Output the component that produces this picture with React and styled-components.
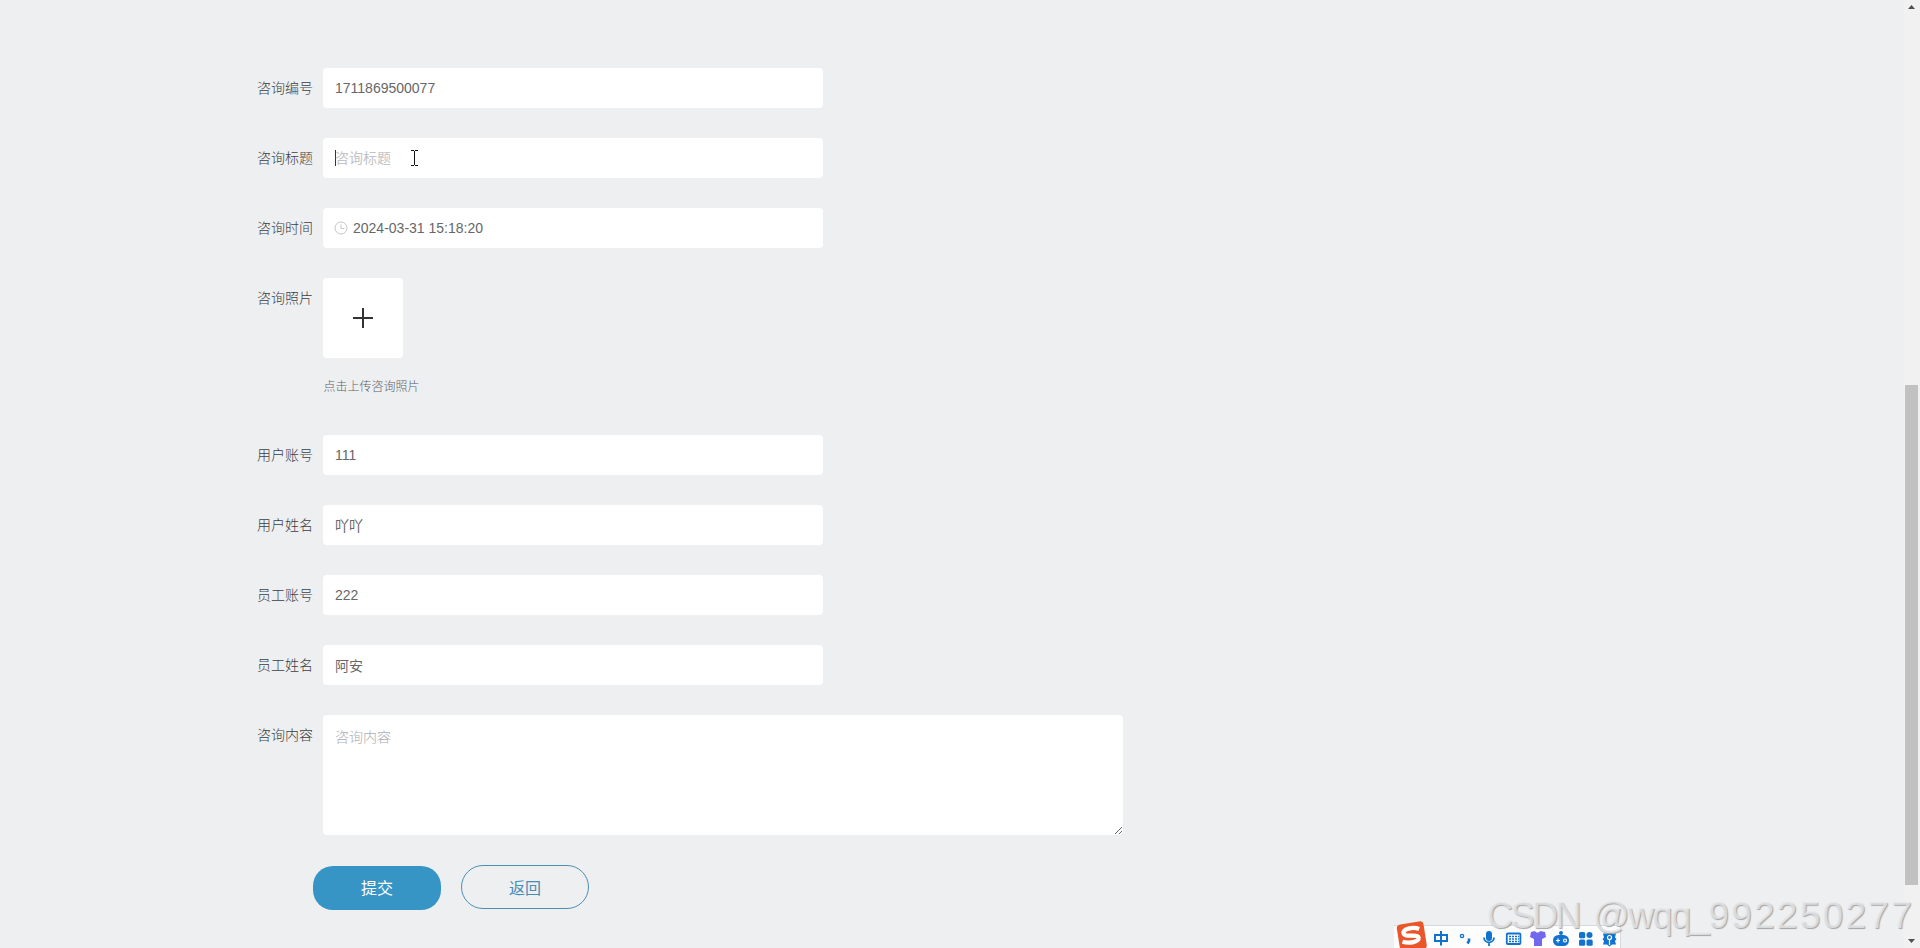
import React, { useState } from "react";
import styled, { createGlobalStyle } from "styled-components";

const fields = {
  top: [
    { label: "咨询编号", value: "1711869500077" },
    { label: "咨询标题", placeholder: "咨询标题", caret: true },
    { label: "咨询时间", value: "2024-03-31 15:18:20", clock: true },
  ],
  bottom: [
    { label: "用户账号", value: "111" },
    { label: "用户姓名", value: "吖吖" },
    { label: "员工账号", value: "222" },
    { label: "员工姓名", value: "阿安" },
  ],
};

const ClockIcon = () => (
  <ClockSvg width="14" height="14" viewBox="0 0 14 14">
    <circle cx="7" cy="7" r="6" />
    <path d="M7 3.5V7.5H10.500" />
  </ClockSvg>
);

const TextCursor = () => (
  <CursorSvg width="8" height="16" viewBox="0 0 8 16" stroke="#111" fill="none">
    <path d="M0 .5H3M4 .5H7M3.5 1V15M0 15.5H3M4 15.5H7" />
  </CursorSvg>
);

const Field = ({ label, value, placeholder, caret, clock }) => {
  const [text, setText] = useState(value || "");
  return (
    <FormItem>
      <Label>{label}</Label>
      <InputBox>
        {clock && <ClockIcon />}
        {caret && <Caret />}
        <Input
          $clock={clock}
          value={text}
          placeholder={placeholder}
          onChange={(e) => setText(e.target.value)}
        />
        {caret && <TextCursor />}
      </InputBox>
    </FormItem>
  );
};

const ImeBar = () => (
  <ImeWrapper>
    <ImeStrip>
      <svg width="220" height="22" viewBox="0 -1 220 22" fill="none" stroke="#1273cf" strokeWidth="2">
        {/* input mode */}
        <path d="M35 8H47V14H35ZM41 4V18.500" />
        {/* punctuation */}
        <circle cx="62" cy="9" r="1.6" strokeWidth="1.4" />
        <path d="M69 11.500V14L67.500 16.500" strokeWidth="2.6" />
        {/* microphone */}
        <rect x="86" y="4" width="6" height="10" rx="3" fill="#1273cf" stroke="none" />
        <path d="M84 10.500C84 17 94 17 94 10.500M89 15V19" strokeWidth="1.8" />
        {/* keyboard */}
        <rect x="106.800" y="6.500" width="13.600" height="10.500" rx="1" strokeWidth="1.8" />
        <path d="M109 9.500H119M109 12H119M109 14.500H119" strokeWidth="1.4" strokeDasharray="2 1" />
        {/* skin */}
        <path d="M131 5L135 4C136 6 139 6 140 4L145 5L146 10L142 12V19H134V12L130 10Z" fill="#7168ee" stroke="none" />
        {/* robot */}
        <rect x="153" y="8" width="16" height="11" rx="5.500" fill="#1273cf" stroke="none" />
        <circle cx="161" cy="6" r="2" fill="#1273cf" stroke="none" />
        <path d="M156 13.500H160M158 11.500V15.500" stroke="#fff" strokeWidth="1.2" />
        <circle cx="165" cy="13.500" r="1.500" stroke="#fff" strokeWidth="1.2" />
        {/* toolbox */}
        <g fill="#1273cf" stroke="none">
          <rect x="179" y="5" width="6.200" height="6.200" rx="1.500" />
          <circle cx="189.500" cy="8" r="3" />
          <rect x="179" y="12.500" width="6.200" height="6.200" rx="1.500" />
          <rect x="186.500" y="12.500" width="6.200" height="6.200" rx="1.500" />
        </g>
        {/* settings */}
        <path d="M209.500 4L212 6.500L216 6.500L215 10.500L216.500 12L215 14L216 17.500L212 17.500L209.500 19.500L207 17.500L203 17.500L204 14L202.500 12L204 10.500L203 6.500L207 6.500Z" fill="#1273cf" stroke="none" />
        <circle cx="209.500" cy="10.500" r="2" stroke="#fff" strokeWidth="1.2" />
        <path d="M209.500 12.500V18" stroke="#fff" strokeWidth="1.2" />
      </svg>
    </ImeStrip>
    <SogouLogo width="34" height="28" viewBox="0 0 34 28">
      <g transform="rotate(-9 16 15)">
        <rect x="4" y="3" width="27" height="28" rx="4" fill="#ea5529" />
        <path d="M26 10.500C20 7 9.500 8 10 12.500C10.500 17 24 14.500 24 19C24 23.500 14 23.500 7.500 20.500" fill="none" stroke="#fff" strokeWidth="4.300" />
      </g>
    </SogouLogo>
  </ImeWrapper>
);

const App = () => {
  const [content, setContent] = useState("");

  return (
    <Page>
      <GlobalStyle />
      <Form onSubmit={(e) => e.preventDefault()}>
        {fields.top.map((field) => (
          <Field key={field.label} {...field} />
        ))}
        <FormItem $gap="39px">
          <Label>咨询照片</Label>
          <Upload>
            <UploadBox type="button">
              <svg width="20" height="20" viewBox="0 0 20 20" stroke="#333" strokeWidth="2">
                <path d="M0 10H20M10 0V20" />
              </svg>
            </UploadBox>
            <Tip>点击上传咨询照片</Tip>
          </Upload>
        </FormItem>
        {fields.bottom.map((field) => (
          <Field key={field.label} {...field} />
        ))}
        <FormItem>
          <Label>咨询内容</Label>
          <TextArea
            placeholder="咨询内容"
            value={content}
            onChange={(e) => setContent(e.target.value)}
          />
        </FormItem>
        <Buttons>
          <SubmitButton>提交</SubmitButton>
          <BackButton type="button">返回</BackButton>
        </Buttons>
      </Form>
      <ScrollBar>
        <Arrow width="7" height="4" viewBox="0 0 7 4">
          <path d="M3.500 0L7 4H0Z" />
        </Arrow>
        <Thumb />
        <Arrow width="7" height="4" viewBox="0 0 7 4">
          <path d="M0 0H7L3.500 4Z" />
        </Arrow>
      </ScrollBar>
      <ImeBar />
      <Watermark>
        <MarkPart $spacing="-2.5px">CSDN</MarkPart>
        <MarkPart $spacing="-1.5px">@wqq_</MarkPart>
        <MarkPart $spacing="2.3px" $size="37px">992250277</MarkPart>
      </Watermark>
    </Page>
  );
};

const GlobalStyle = createGlobalStyle`
  * {
    box-sizing: border-box;
  }

  body {
    margin: 0;
    overflow: hidden;
    font-family: "Liberation Sans", "Noto Sans CJK SC", sans-serif;
  }

  button, input, textarea {
    font-family: inherit;
    outline: none;
  }
`;

const Page = styled.div`
  position: relative;
  display: flex;
  justify-content: space-between;
  height: 948px;
  overflow: hidden;
  background: #eeeff0;
`;

const Form = styled.form`
  padding: 68px 0 0 243px;
`;

const FormItem = styled.div`
  display: flex;
  align-items: flex-start;
  margin-bottom: ${(props) => props.$gap || "30px"};
`;

const Label = styled.label`
  width: 80px;
  padding-right: 10px;
  color: #3c3e42;
  font-size: 14px;
  font-weight: 300;
  line-height: 40px;
  text-align: right;
`;

const InputBox = styled.div`
  position: relative;
  display: flex;
  align-items: center;
  width: 500px;
  height: 40px;
  padding: 0 12px;
  border-radius: 4px;
  background: #fff;
`;

const ClockSvg = styled.svg`
  margin-left: -1px;
  fill: none;
  stroke: #c4c6ca;
`;

const Input = styled.input`
  flex: 1;
  height: 40px;
  padding: 0 0 0 ${(props) => (props.$clock ? "5px" : "0")};
  border: none;
  background: transparent;
  color: #66676a;
  font-size: 14px;

  &::placeholder {
    color: #c2c3c6;
  }
`;

const Caret = styled.span`
  width: 1px;
  height: 16px;
  margin-right: -1px;
  background: #333;
`;

const CursorSvg = styled.svg`
  position: absolute;
  left: 88px;
  top: 12px;
`;

const Upload = styled.div`
  display: flex;
  flex-direction: column;
`;

const UploadBox = styled.button`
  display: flex;
  align-items: center;
  justify-content: center;
  width: 80px;
  height: 80px;
  padding: 0;
  border: none;
  border-radius: 4px;
  background: #fff;
`;

const Tip = styled.div`
  margin-top: 20px;
  padding-left: 0.5px;
  color: #5c5f66;
  font-size: 12px;
  font-weight: 300;
  line-height: 18px;
`;

const TextArea = styled.textarea`
  width: 800px;
  height: 120px;
  padding: 12px;
  border: none;
  border-radius: 4px;
  background: #fff;
  color: #606266;
  font-size: 14px;
  line-height: 20px;

  &::placeholder {
    color: #acaeb2;
    font-weight: 300;
  }
`;

const Buttons = styled.div`
  display: flex;
  gap: 20px;
  padding-left: 70px;
`;

const SubmitButton = styled.button`
  width: 128px;
  height: 44px;
  margin-top: 1px;
  padding-bottom: 3px;
  border: none;
  border-radius: 20px;
  background: #3795c6;
  color: #fff;
  font-size: 16px;
`;

const BackButton = styled(SubmitButton)`
  margin-top: 0;
  padding-bottom: 1px;
  border: 1px solid #4a90b5;
  border-radius: 22px;
  background: transparent;
  color: #468db5;
`;

const ScrollBar = styled.div`
  display: flex;
  flex-direction: column;
  align-items: center;
  justify-content: space-between;
  width: 16px;
  padding: 5px 1px 5px 0;
  background: #f1f1f1;
`;

const Thumb = styled.div`
  width: 13px;
  height: 500px;
  margin-top: 322px;
  background: #c1c1c1;
`;

const Arrow = styled.svg`
  fill: #505050;
`;

const ImeWrapper = styled.div`
  position: absolute;
  left: 1394px;
  bottom: 0;
  height: 28px;
`;

const ImeStrip = styled.div`
  width: 227px;
  height: 23px;
  margin-top: 5px;
  padding-left: 6px;
  border-top: 1px solid #d5dade;
  border-right: 1px solid #d5dade;
  background: #fdfdfe;
`;

const SogouLogo = styled.svg`
  position: absolute;
  left: 0;
  top: 0;
`;

const Watermark = styled.div`
  position: absolute;
  left: 1487px;
  top: 895px;
  display: flex;
  align-items: baseline;
  color: rgba(232, 233, 234, 0.8);
  line-height: 42px;
  text-shadow: 1px 1px 1px #a4a4a6;
  white-space: nowrap;
`;

const MarkPart = styled.span`
  font-size: ${(props) => props.$size || "36px"};
  letter-spacing: ${(props) => props.$spacing};

  &:first-child {
    margin-right: 14px;
  }
`;

export default App;
